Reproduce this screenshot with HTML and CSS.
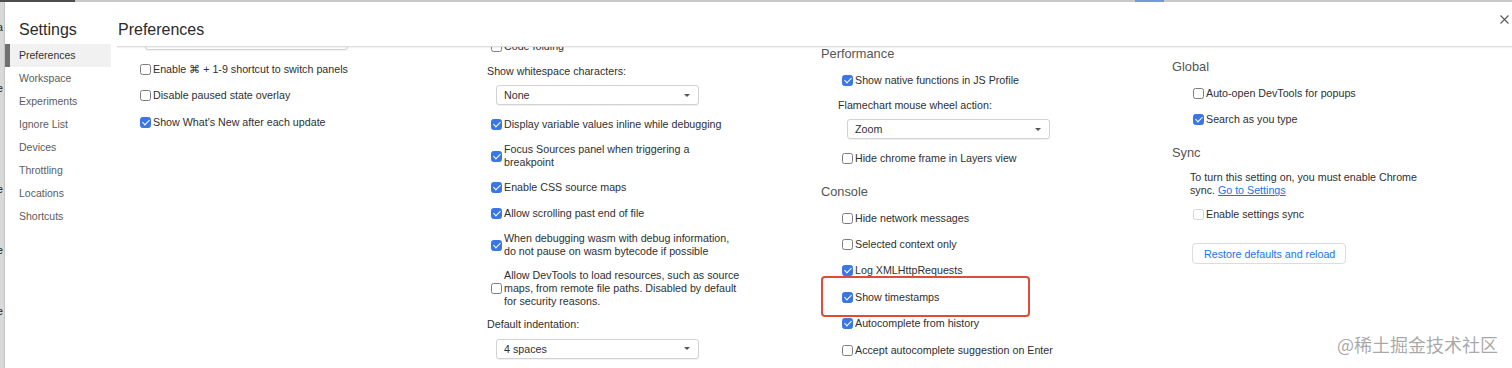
FILE: index.html
```html
<!DOCTYPE html>
<html lang="en">
<head>
  <meta charset="UTF-8">
  <meta name="viewport" content="width=device-width, initial-scale=1.0">
  <title>Settings - Preferences</title>
  <link rel="stylesheet" href="styles.css">
</head>
<body>
  <div class="page">
    <div class="topline"></div>
    <div class="main">
      <div class="edge"><div class="edge-text">a


e




e


e


e</div></div>

      <div class="dialog">
        <aside class="sidebar">
          <h1 class="sidebar-title">Settings</h1>
          <ul class="nav">
            <li class="nav-item selected">Preferences</li>
            <li class="nav-item">Workspace</li>
            <li class="nav-item">Experiments</li>
            <li class="nav-item">Ignore List</li>
            <li class="nav-item">Devices</li>
            <li class="nav-item">Throttling</li>
            <li class="nav-item">Locations</li>
            <li class="nav-item">Shortcuts</li>
          </ul>
        </aside>

        <section class="content">
          <header class="content-header">
            <h2>Preferences</h2>
            <svg class="close" width="9" height="9" viewBox="0 0 9 9">
              <path d="M0.5 0.5 L8.5 8.5 M8.5 0.5 L0.5 8.5" stroke="#5a5a5a" stroke-width="1.1" fill="none"/>
            </svg>
          </header>

          <div class="columns">
            <!-- Appearance (rolado) -->
            <div class="col col-1">
              <div class="select"></div>
              <label class="row"><span class="box"></span><span class="row-text">Enable ⌘ + 1-9 shortcut to switch panels</span></label>
              <label class="row"><span class="box"></span><span class="row-text">Disable paused state overlay</span></label>
              <label class="row"><span class="box checked"></span><span class="row-text">Show What's New after each update</span></label>
            </div>

            <!-- Sources (rolado) -->
            <div class="col col-2">
              <label class="row"><span class="box"></span><span class="row-text">Code folding</span></label>
              <div class="field-label">Show whitespace characters:</div>
              <div class="select"><span>None</span></div>
              <label class="row"><span class="box checked"></span><span class="row-text">Display variable values inline while debugging</span></label>
              <label class="row"><span class="box checked"></span><span class="row-text">Focus Sources panel when triggering a breakpoint</span></label>
              <label class="row"><span class="box checked"></span><span class="row-text">Enable CSS source maps</span></label>
              <label class="row"><span class="box checked"></span><span class="row-text">Allow scrolling past end of file</span></label>
              <label class="row"><span class="box checked"></span><span class="row-text">When debugging wasm with debug information, do not pause on wasm bytecode if possible</span></label>
              <label class="row"><span class="box"></span><span class="row-text">Allow DevTools to load resources, such as source maps, from remote file paths. Disabled by default for security reasons.</span></label>
              <div class="field-label">Default indentation:</div>
              <div class="select"><span>4 spaces</span></div>
            </div>

            <div class="col col-3">
              <h3 class="section-title">Performance</h3>
              <label class="row"><span class="box checked"></span><span class="row-text">Show native functions in JS Profile</span></label>
              <div class="field-label">Flamechart mouse wheel action:</div>
              <div class="select"><span>Zoom</span></div>
              <label class="row"><span class="box"></span><span class="row-text">Hide chrome frame in Layers view</span></label>

              <h3 class="section-title">Console</h3>
              <label class="row"><span class="box"></span><span class="row-text">Hide network messages</span></label>
              <label class="row"><span class="box"></span><span class="row-text">Selected context only</span></label>
              <label class="row"><span class="box checked"></span><span class="row-text">Log XMLHttpRequests</span></label>
              <label class="row marked"><span class="box checked"></span><span class="row-text">Show timestamps</span></label>
              <label class="row"><span class="box checked"></span><span class="row-text">Autocomplete from history</span></label>
              <label class="row"><span class="box"></span><span class="row-text">Accept autocomplete suggestion on Enter</span></label>
            </div>

            <div class="col col-4">
              <h3 class="section-title">Global</h3>
              <label class="row"><span class="box"></span><span class="row-text">Auto-open DevTools for popups</span></label>
              <label class="row"><span class="box checked"></span><span class="row-text">Search as you type</span></label>

              <h3 class="section-title">Sync</h3>
              <p class="note">To turn this setting on, you must enable Chrome sync. <a href="#">Go to Settings</a></p>
              <label class="row"><span class="box disabled"></span><span class="row-text">Enable settings sync</span></label>
              <button class="btn" type="button">Restore defaults and reload</button>
            </div>
          </div>
        </section>
      </div>
    </div>

    <div class="watermark">@稀土掘金技术社区</div>
  </div>
</body>
</html>
```

FILE: styles.css
```css
/* Reset e tipografia */
* { box-sizing: border-box; margin: 0; padding: 0; }
body {
  font-family: "Liberation Sans", Arial, sans-serif;
  font-size: 10.7px;
  color: #303030;
  background: #fff;
  width: 1512px;
  height: 368px;
  overflow: hidden;
}

.page {
  position: relative;
  display: flex;
  flex-direction: column;
  height: 368px;
}

/* Janela por trás do diálogo */
.topline {
  height: 2px;
  flex: none;
  background: linear-gradient(to right, #4d4d4d 0 75px, #c8c8c8 75px 1135px, #7796dc 1135px 1164px, #c8c8c8 1164px);
}
.main { display: flex; flex: 1; min-height: 0; }

.edge {
  width: 5px;
  flex: none;
  background: #d8d8d8;
  border-right: 1px solid #c4c4c4;
  overflow: hidden;
}
.edge-text {
  white-space: pre;
  line-height: 20.3px;
  padding-top: 15px;
  margin-left: -3px;
  color: #222;
}

/* Diálogo */
.dialog { display: flex; flex: 1; min-width: 0; background: #fff; }

.sidebar { width: 106px; flex: none; }
.sidebar-title {
  font-size: 16px;
  line-height: 20px;
  font-weight: normal;
  color: #2b2b2b;
  padding: 18px 0 4px 14px;
}
.nav { list-style: none; }
.nav-item {
  height: 23px;
  line-height: 23px;
  font-size: 10.5px;
  color: #5c5c5c;
  border-left: 5px solid transparent;
  padding-left: 9px;
}
.nav-item.selected {
  border-left-color: #707070;
  background: #f1f1f1;
  color: #333;
}

.content { flex: 1; min-width: 0; display: flex; flex-direction: column; }

.content-header {
  position: relative;
  z-index: 1;
  height: 45px;
  flex: none;
  margin-left: 6px;
  display: flex;
  justify-content: space-between;
  align-items: flex-start;
  background: #fff;
  border-bottom: 1px solid #dedede;
  box-shadow: 0 1px 1px rgba(0,0,0,0.05);
}
.content-header h2 {
  font-size: 16px;
  line-height: 20px;
  font-weight: normal;
  color: #2b2b2b;
  padding: 18px 0 0 1px;
}
.close { margin: 13px 3px 0 0; }

/* Colunas */
.columns {
  flex: 1;
  min-height: 0;
  overflow: hidden;
  display: grid;
  grid-template-columns: repeat(4, 351px);
  align-items: start;
  padding-left: 8px;
}
.col { display: flex; flex-direction: column; align-items: flex-start; }
.col-1 { margin-top: -17px; }
.col-2 { margin-top: -11px; }
.col-3 { margin-top: -1px; }
.col-4 { margin-top: 12px; }

.section-title {
  font-size: 12.8px;
  line-height: 16px;
  font-weight: normal;
  color: #555;
  margin: 9px 0 8px;
}
.col .section-title:first-child { margin-top: 0; }

.row {
  display: flex;
  align-items: center;
  min-height: 20px;
  margin-bottom: 6.4px;
  padding-left: 21px;
}
.row-text {
  line-height: 13px;
  padding: 2px 0;
  max-width: 237px;
}

.box {
  width: 11px;
  height: 11px;
  flex: none;
  margin-right: 2px;
  border: 1px solid #7c7c7c;
  border-radius: 2.5px;
  background: #fff;
  display: inline-flex;
  align-items: center;
  justify-content: center;
}
.box.checked { background: #3a76e4; border-color: #3a76e4; }
.box.checked::after {
  content: "";
  width: 3px;
  height: 6px;
  margin-top: -2px;
  border: solid #fff;
  border-width: 0 1.6px 1.6px 0;
  transform: rotate(45deg);
}
.box.disabled { border-color: #d6d6d6; }

.field-label {
  line-height: 13px;
  margin: 2.3px 0 7.5px;
  padding-left: 17px;
}

.select {
  width: 203px;
  height: 20px;
  margin: 0 0 9.5px 26px;
  padding: 0 8px 0 7px;
  display: flex;
  align-items: center;
  justify-content: space-between;
  border: 1px solid #d2d2d2;
  border-radius: 3px;
  background: #fff;
  box-shadow: 0 1px 1px rgba(0,0,0,0.06);
}
.select::after {
  content: "";
  margin-left: auto;
  border-left: 3.5px solid transparent;
  border-right: 3.5px solid transparent;
  border-top: 3.5px solid #555;
}

/* Destaque vermelho da captura */
.marked { position: relative; }
.marked::before {
  content: "";
  position: absolute;
  left: 0;
  top: -11px;
  width: 205px;
  height: 37px;
  border: 2px solid #e24c34;
  border-radius: 4px;
}

.note {
  line-height: 13px;
  margin: 2.5px 0 7.5px;
  padding-left: 18px;
  width: 260px;
}
.note a { color: #1a73e8; }

.btn {
  margin: 12px 0 0 20px;
  height: 21px;
  padding: 0 10px 0 11px;
  font: inherit;
  color: #1a73e8;
  background: #fff;
  border: 1px solid #dadce0;
  border-radius: 4px;
}

.watermark {
  position: absolute;
  right: 14px;
  bottom: 13px;
  font-family: "Noto Sans CJK SC", sans-serif;
  font-size: 18px;
  line-height: 22px;
  color: rgba(140,140,140,0.75);
  text-shadow: 0 0 1px #fff;
}
```
